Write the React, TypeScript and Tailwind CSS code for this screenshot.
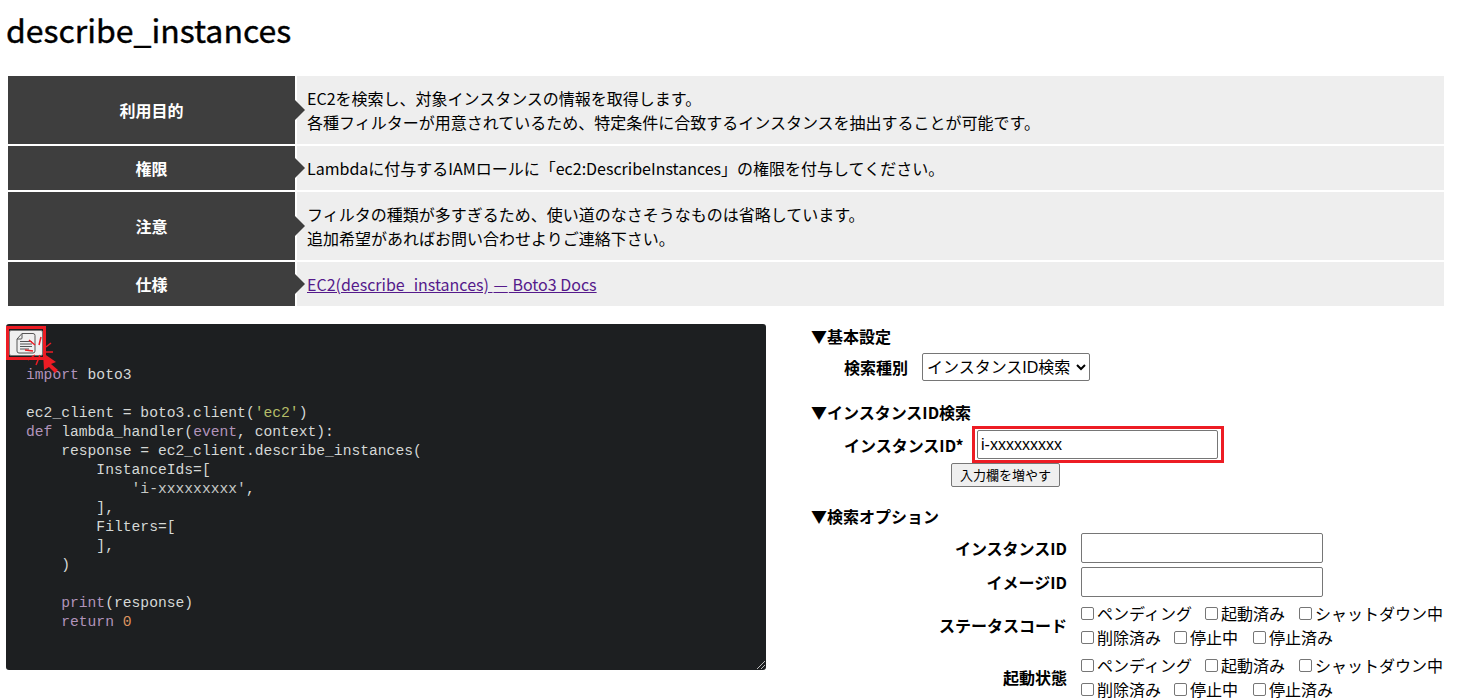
import React from "react";

const jp = "font-['Noto_Sans_CJK_JP','Noto_Sans',sans-serif]";

function Row({ head, children }: { head: string; children: React.ReactNode }) {
  return (
    <div className="flex gap-[2px]">
      <div className="relative w-[287px] shrink-0 bg-[#3e3e3e] flex items-center justify-center text-white font-bold text-[16px]">
        {head}
        <span className="absolute left-[287px] top-1/2 -translate-y-1/2 w-0 h-0 border-y-[10px] border-y-transparent border-l-[10px] border-l-[#3e3e3e]" />
      </div>
      <div className="flex-1 bg-[#eeeeee] py-[10px] pl-[10px] text-[16px] leading-[24px] text-black">{children}</div>
    </div>
  );
}

const K = ({ children }: { children: React.ReactNode }) => <span className="text-[#b294bb]">{children}</span>;

function Check({ label, gap }: { label: string; gap: string }) {
  return (
    <label className={`flex items-center ${gap}`}>
      <input type="checkbox" className="appearance-none w-[13px] h-[13px] mr-[3px] border border-[#767676] rounded-[2px] bg-white" />
      <span>{label}</span>
    </label>
  );
}

function CheckRows() {
  return (
    <div className="flex flex-col text-[16px] leading-[24px]">
      <div className="flex">
        <Check label="ペンディング" gap="mr-[13px]" />
        <Check label="起動済み" gap="mr-[14px]" />
        <Check label="シャットダウン中" gap="" />
      </div>
      <div className="flex">
        <Check label="削除済み" gap="mr-[13px]" />
        <Check label="停止中" gap="mr-[15px]" />
        <Check label="停止済み" gap="" />
      </div>
    </div>
  );
}

function Field({ label }: { label: string }) {
  return (
    <div className="flex items-center h-[30px] mb-[4px]">
      <div className="w-[256px] text-right font-bold text-[16px]">{label}</div>
      <input className="ml-[14px] w-[242px] h-[30px] border border-[#767676] rounded-[2px] bg-white" />
    </div>
  );
}

export default function App() {
  return (
    <div className={`h-[700px] w-[1464px] overflow-hidden bg-white text-black ${jp}`}>
      <h1 className="pl-[6px] pt-[7px] h-[76px] text-[32px] leading-[44px] font-normal [-webkit-text-stroke:0.4px_black]">describe_instances</h1>

      <div className="ml-[8px] w-[1436px] flex flex-col gap-[2px]">
        <Row head="利用目的">
          EC2を検索し、対象インスタンスの情報を取得します。<br />
          各種フィルターが用意されているため、特定条件に合致するインスタンスを抽出することが可能です。
        </Row>
        <Row head="権限">Lambdaに付与するIAMロールに「ec2:DescribeInstances」の権限を付与してください。</Row>
        <Row head="注意">
          フィルタの種類が多すぎるため、使い道のなさそうなものは省略しています。<br />
          追加希望があればお問い合わせよりご連絡下さい。
        </Row>
        <Row head="仕様">
          <a href="#" className="text-[#551a8b] underline">EC2(describe_instances) <span className="mx-[1px]">—</span> Boto3 Docs</a>
        </Row>
      </div>

      <div className="flex mt-[18px]">
        <div className="relative ml-[6px] w-[760px] h-[346px] shrink-0 bg-[#1d1f21] rounded-[3px] pt-[42px] pl-[20px]">
          <pre className="font-['Liberation_Mono',monospace] text-[14.67px] leading-[19px] text-[#d5d8d6]">
<K>import</K>{" boto3\n\nec2_client = boto3.client("}<span className="text-[#b5bd68]">'ec2'</span>{")\n"}<K>def</K>{" lambda_handler("}<K>event</K>{", context):\n    response = ec2_client.describe_instances(\n        InstanceIds=[\n            "}<span className="text-[#c5c8c6]">'i-xxxxxxxxx'</span>{",\n        ],\n        Filters=[\n        ],\n    )\n\n    "}<K>print</K>{"(response)\n    "}<K>return</K>{" "}<span className="text-[#de935f]">0</span>
          </pre>

          {/* copy button */}
          <button className="absolute left-[3px] top-[6px] w-[34px] h-[26px] bg-[#efefef] border border-[#767676] rounded-[2px] flex items-center justify-center">
            <svg width="20" height="22" viewBox="0 0 20 22" fill="none" stroke="#555" strokeWidth="1">
              <path d="M6 1.5 H17 Q19 1.5 19 3.5 V19 Q19 21 17 21 H3 Q1 21 1 19 V7 Z" />
              <path d="M1 7 H5 Q6 7 6 6 V1.5" />
              <path d="M4 9.5 H16 M4 12 H16 M4 14.5 H16 M4 17 H13" />
            </svg>
          </button>
          {/* red annotation */}
          <div className="absolute left-0 top-[2px] w-[40px] h-[34px] border-[3px] border-[#ed1c24]" />
          <svg className="absolute left-[14px] top-[10px]" width="40" height="40" viewBox="0 0 40 40" fill="none" stroke="#ed1c24" strokeWidth="1.5">
            <path d="M9 6 L15 11 M21 3 L19 11 M31 9 L26 13 M33 18 L25 18 M5 16 L13 17 M8 26 L15 21 M20 21 L16 31" />
            <path d="M23 19 L36 28 L31 30 L38 36 L35 39 L29 33 L24 36 Z" fill="#ed1c24" stroke="none" />
          </svg>
          {/* resize grip */}
          <svg className="absolute right-0 bottom-0" width="10" height="10" viewBox="0 0 10 10" stroke="#bbb" strokeWidth="1">
            <path d="M1 9 L9 1 M5 9 L9 5" />
          </svg>
        </div>

        <div className="ml-[45px] flex-1 text-[16px]">
          <div className="font-bold leading-[24px]">▼基本設定</div>
          <div className="flex items-center mt-[5px]">
            <div className="ml-[33px] w-[64px] font-bold leading-[28px]">検索種別</div>
            <select defaultValue="a" className="appearance-auto ml-[14px] w-[168px] h-[28px] border border-[#767676] rounded-[2px] bg-white font-['Liberation_Sans','Noto_Sans_CJK_JP',sans-serif] text-[16px]">
              <option value="a">インスタンスID検索</option>
            </select>
          </div>

          <div className="font-bold leading-[24px] mt-[19px]">▼インスタンスID検索</div>
          <div className="relative flex items-center mt-[6px] h-[29px]">
            <div className="ml-[33px] w-[118px] font-bold whitespace-nowrap">インスタンスID*</div>
            <input defaultValue="i-xxxxxxxxx" className="ml-[15px] w-[241px] h-[29px] border border-[#767676] rounded-[2px] bg-white px-[3px] font-['Liberation_Sans',sans-serif] text-[16px]" />
            <div className="absolute left-[161px] top-[-4px] w-[252px] h-[37px] border-[3px] border-[#ed1c24]" />
          </div>
          <button className="block ml-[140px] mt-[4px] w-[109px] h-[24px] bg-[#efefef] border border-[#767676] rounded-[2px] text-[13px] leading-[18px]">入力欄を増やす</button>

          <div className="font-bold leading-[24px] mt-[17px] mb-[5px]">▼検索オプション</div>
          <Field label="インスタンスID" />
          <Field label="イメージID" />
          <div className="flex items-center mb-[4px]">
            <div className="w-[256px] text-right font-bold">ステータスコード</div>
            <div className="ml-[14px]"><CheckRows /></div>
          </div>
          <div className="flex items-center">
            <div className="w-[256px] text-right font-bold">起動状態</div>
            <div className="ml-[14px]"><CheckRows /></div>
          </div>
        </div>
      </div>
    </div>
  );
}
